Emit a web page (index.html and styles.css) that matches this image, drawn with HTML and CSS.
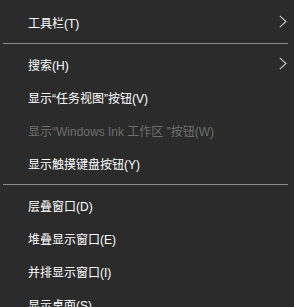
FILE: index.html
```html
<!DOCTYPE html>
<html lang="zh-CN">
<head>
<meta charset="utf-8">
<link rel="stylesheet" href="styles.css">
</head>
<body>
<div class="menu">
  <div class="item"><span class="label">工具栏(T)</span><svg class="chev" width="8" height="13" viewBox="0 0 8 13"><polyline points="0.8,0.8 7,6.5 0.8,12.2" fill="none" stroke="#c8c8c8" stroke-width="1.1"/></svg></div>
  <div class="sep"></div>
  <div class="item"><span class="label">搜索(H)</span><svg class="chev" width="8" height="13" viewBox="0 0 8 13"><polyline points="0.8,0.8 7,6.5 0.8,12.2" fill="none" stroke="#c8c8c8" stroke-width="1.1"/></svg></div>
  <div class="item"><span class="label">显示“任务视图”按钮(V)</span></div>
  <div class="item disabled"><span class="label">显示“Windows Ink 工作区 ”按钮(W)</span></div>
  <div class="item"><span class="label">显示触摸键盘按钮(Y)</span></div>
  <div class="sep"></div>
  <div class="item"><span class="label">层叠窗口(D)</span></div>
  <div class="item"><span class="label">堆叠显示窗口(E)</span></div>
  <div class="item"><span class="label">并排显示窗口(I)</span></div>
  <div class="item"><span class="label">显示桌面(S)</span></div>
</div>
</body>
</html>
```
FILE: styles.css
```css
html, body {
  margin: 0;
  padding: 0;
  background: #2b2b2b;
}
body {
  font-family: "Liberation Sans", "Noto Sans CJK SC", sans-serif;
  font-size: 12px;
  color: #ffffff;
  overflow: hidden;
}
.menu {
  width: 294px;
  padding-top: 7px;
  display: flex;
  flex-direction: column;
}
.item {
  height: 33px;
  display: flex;
  align-items: center;
  justify-content: space-between;
  padding: 0 7px 0 28px;
}
.label {
  line-height: 16px;
  white-space: nowrap;
}
.disabled {
  color: #6e6e6e;
}
.chev {
  display: block;
  margin-bottom: 4px;
}
.sep {
  height: 9px;
  display: flex;
  flex-direction: column;
  padding: 3px 6px 0 3px;
  box-sizing: border-box;
}
.sep::before {
  content: "";
  display: block;
  height: 1px;
  background: #8a8a8a;
}
```
